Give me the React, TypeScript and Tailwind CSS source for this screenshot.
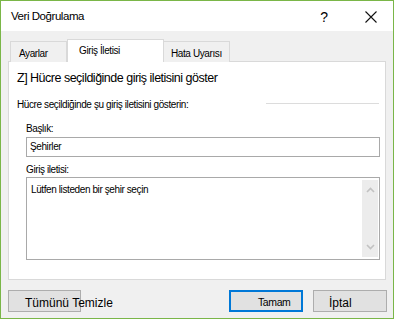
import React from "react";

export default function App() {
  return (
    <div className="w-[396px] h-[321px] bg-white">
      <div className="w-[394px] h-[319px] border border-[#7ab648] bg-[#f0f0f0] flex flex-col text-black font-['Liberation_Sans',Arial,sans-serif]">
        {/* title bar */}
        <div className="h-[30px] bg-white flex items-center shrink-0 pt-[1px]">
          <span className="ml-[10px] text-[11.5px] tracking-[-0.45px] leading-none">Veri Doğrulama</span>
          <span className="ml-auto mr-[37px] text-[14px] leading-none">?</span>
          <svg width="12" height="12" viewBox="0 0 12 12" className="mr-[16px]">
            <path d="M0.5 0.5 L11.5 11.5 M11.5 0.5 L0.5 11.5" stroke="#111" strokeWidth="1.1" fill="none" />
          </svg>
        </div>
        {/* tabs */}
        <div className="flex items-end h-[30px] pl-[9px] shrink-0 relative z-10 text-[10px] tracking-[-0.4px] leading-none whitespace-nowrap">
          <div className="w-[57px] h-[21px] border border-b-0 border-[#d9d9d9] flex items-center pl-[8px] mb-[-1px] pt-[3px] bg-[#f0f0f0]">Ayarlar</div>
          <div className="w-[97px] h-[23px] border border-b-0 border-[#d9d9d9] bg-white flex items-center pl-[11px] mb-[-1px] pb-[1px]">Giriş İletisi</div>
          <div className="w-[66px] h-[21px] border border-l-0 border-b-0 border-[#d9d9d9] flex items-center pl-[7px] mb-[-1px] pt-[3px] bg-[#f0f0f0]">Hata Uyarısı</div>
        </div>
        {/* panel */}
        <div className="ml-[7px] w-[378px] h-[219px] border border-[#d9d9d9] bg-white shrink-0 flex flex-col text-[10px] tracking-[-0.4px] leading-none">
          <div className="mt-[10px] ml-[8px] text-[12.5px] tracking-[-0.5px] leading-none">Z] Hücre seçildiğinde giriş iletisini göster</div>
          <div className="flex items-center mt-[15px] ml-[8px]">
            <span className="w-[249px] whitespace-nowrap">Hücre seçildiğinde şu giriş iletisini gösterin:</span>
            <div className="w-[113px] h-px bg-[#dcdcdc] -mt-[3px]"></div>
          </div>
          <div className="ml-[17px] mt-[14px]">Başlık:</div>
          <div className="ml-[17px] mt-[3px] w-[354px] h-[20px] border border-[#a9a9a9] flex items-center pl-[3px]">Şehirler</div>
          <div className="ml-[17px] mt-[8px]">Giriş iletisi:</div>
          <div className="ml-[17px] mt-[2px] w-[354px] h-[83px] border border-[#a9a9a9] flex">
            <div className="flex-1 pl-[4px] pt-[7px]">Lütfen listeden bir şehir seçin</div>
            <div className="w-[16px] mt-[2px] mb-[2px] mr-[1px] bg-[#ececec] flex flex-col items-center justify-between py-[7px]">
              <svg width="9" height="6" viewBox="0 0 9 6"><path d="M1 5 L4.5 1.5 L8 5" stroke="#c2c2c2" strokeWidth="1.6" fill="none" /></svg>
              <svg width="9" height="6" viewBox="0 0 9 6"><path d="M1 1 L4.5 4.5 L8 1" stroke="#c2c2c2" strokeWidth="1.6" fill="none" /></svg>
            </div>
          </div>
        </div>
        {/* buttons */}
        <div className="flex mt-[10px] h-[22px] shrink-0 leading-none text-[12px]">
          <div className="ml-[7px] w-[73px] h-[22px] border border-[#adadad] bg-[#e1e1e1] flex items-center pl-[16px] pt-[4px] whitespace-nowrap overflow-visible">Tümünü Temizle</div>
          <div className="ml-[148px] w-[74px] h-[22px] border-2 border-[#0078d7] bg-[#e1e1e1] flex items-center pl-[27px] pt-[3px] text-[10.5px] tracking-[-0.4px]">Tamam</div>
          <div className="ml-[10px] w-[74px] h-[22px] border border-[#adadad] bg-[#e1e1e1] flex items-center pl-[15px] pt-[3px]">İptal</div>
        </div>
      </div>
    </div>
  );
}
